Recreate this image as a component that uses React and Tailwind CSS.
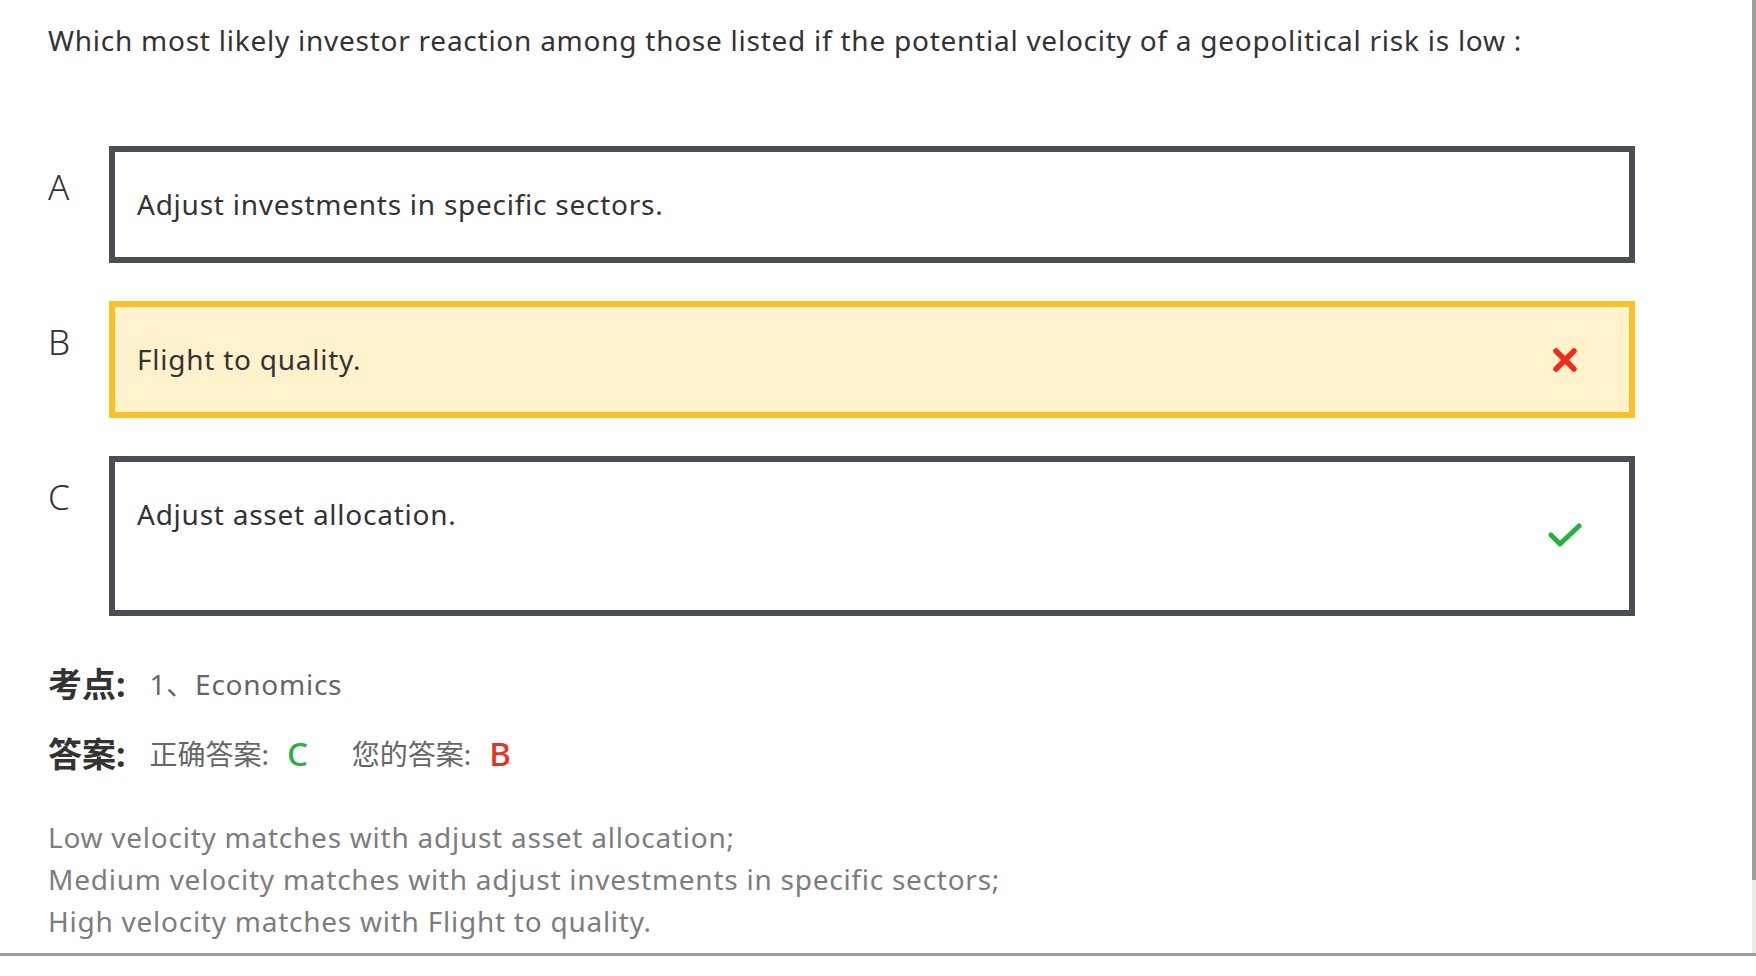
import React from 'react';

const options = [
  { key: 'A', lines: ['Adjust investments in specific sectors.'], state: 'normal' },
  { key: 'B', lines: ['Flight to quality.'], state: 'wrong' },
  { key: 'C', lines: ['Adjust asset allocation.', '\u00a0'], state: 'right' },
];

const WrongIcon = () => (
  <svg width="26" height="26" viewBox="0 0 26 26" fill="none">
    <path d="M4 4 L22 22 M22 4 L4 22" stroke="#f5291b" strokeWidth="5.5" strokeLinecap="round" />
  </svg>
);

const RightIcon = () => (
  <svg width="34" height="26" viewBox="0 0 34 26" fill="none">
    <path d="M3 12 L12 21 L31 3" stroke="#27b144" strokeWidth="5" strokeLinecap="round" strokeLinejoin="round" />
  </svg>
);

const OptionRow = ({ option }) => {
  const boxClass =
    option.state === 'wrong'
      ? 'border-[#fbc227] bg-[#fff2cc]'
      : 'border-[#4a4e55] bg-white';

  return (
    <div className="flex items-start">
      <div className="w-[61px] shrink-0 pt-[17px] text-[35px] leading-[48px] font-light text-[#333]">
        {option.key}
      </div>
      <div className={`flex flex-1 items-center justify-between border-[6px] pl-[22px] pr-[44px] py-[31px] ${boxClass}`}>
        <div className="text-[28px] leading-[43px] text-[#333]">
          {option.lines.map((line, i) => (
            <div key={i}>{line}</div>
          ))}
        </div>
        <div className="flex w-10 justify-center">
          {option.state === 'wrong' && <WrongIcon />}
          {option.state === 'right' && <RightIcon />}
        </div>
      </div>
    </div>
  );
};

export default function App() {
  return (
    <div
      className="flex h-[976px] w-[1756px] flex-col overflow-hidden bg-white tracking-[0.75px]"
      style={{ fontFamily: '"Noto Sans", "Noto Sans CJK SC", sans-serif' }}
    >
      <div className="flex h-[953px]">
        {/* Page */}
        <div className="flex-1 pl-12 pr-[117px] pt-[19px]">
          <p className="text-[28px] leading-[42px] text-[#333]">
            Which most likely investor reaction among those listed if the potential velocity of a geopolitical risk is low :
          </p>

          <div className="mt-[85px] flex flex-col gap-[38px]">
            {options.map((o) => (
              <OptionRow key={o.key} option={o} />
            ))}
          </div>

          {/* Meta */}
          <div className="mt-[47px] flex items-center leading-[42px]">
            <span className="text-[34px] font-bold tracking-normal text-[#333]">考点:</span>
            <span className="ml-[24px] text-[28px] text-[#666]">1、Economics</span>
          </div>
          <div className="mt-[28px] flex items-center leading-[42px]">
            <span className="text-[34px] font-bold tracking-normal text-[#333]">答案:</span>
            <span className="ml-[24px] text-[28px] tracking-normal text-[#666]">正确答案:</span>
            <span className="ml-[18px] text-[33px] font-medium text-[#2bae47]">C</span>
            <span className="ml-[43px] text-[28px] tracking-normal text-[#666]">您的答案:</span>
            <span className="ml-[18px] text-[33px] font-medium text-[#e8321e]">B</span>
          </div>

          {/* Explanation */}
          <div className="mt-[41px] text-[28px] leading-[42px] text-[#7d7d7d]">
            <p>Low velocity matches with adjust asset allocation;</p>
            <p>Medium velocity matches with adjust investments in specific sectors;</p>
            <p>High velocity matches with Flight to quality.</p>
          </div>
        </div>

        {/* Scrollbar */}
        <div className="flex w-1 flex-col">
          <div className="h-[880px] bg-[#9e9e9e]" />
          <div className="flex-1 bg-[#ececec]" />
        </div>
      </div>
      <div className="h-[3px] bg-[#9e9e9e]" />
      <div className="flex-1 bg-white" />
    </div>
  );
}
